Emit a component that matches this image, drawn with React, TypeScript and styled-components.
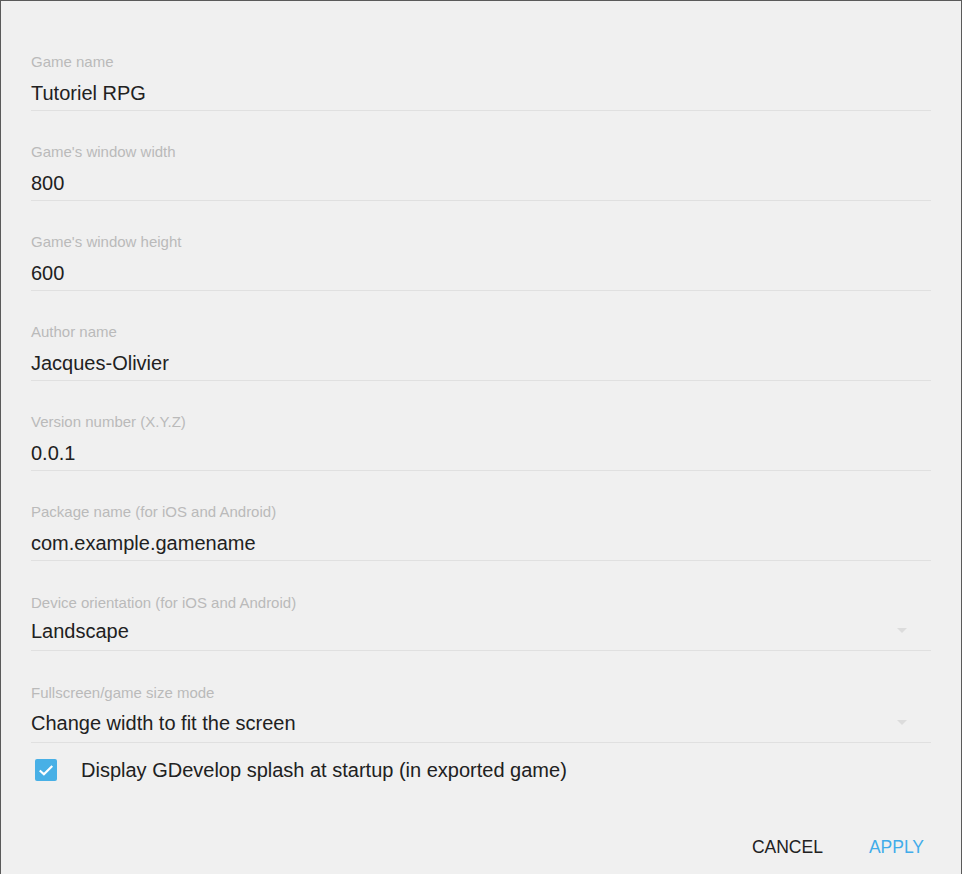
import React from "react";
import styled, { createGlobalStyle } from "styled-components";

const GlobalStyle = createGlobalStyle`
  html, body {
    margin: 0;
    padding: 0;
    background: #f0f0f0;
  }
  body {
    font-family: "Liberation Sans", Arial, sans-serif;
  }
`;

interface IField {
  label: string;
  value: string;
  select?: boolean;
  gap?: number;
}

const fields: IField[] = [
  { label: "Game name", value: "Tutoriel RPG" },
  { label: "Game's window width", value: "800" },
  { label: "Game's window height", value: "600" },
  { label: "Author name", value: "Jacques-Olivier" },
  { label: "Version number (X.Y.Z)", value: "0.0.1" },
  { label: "Package name (for iOS and Android)", value: "com.example.gamename" },
  { label: "Device orientation (for iOS and Android)", value: "Landscape", select: true, gap: 8 },
  { label: "Fullscreen/game size mode", value: "Change width to fit the screen", select: true, gap: 10 },
];

const Field: React.FC<IField> = ({ label, value, select, gap = 11 }) => {
  return (
    <FieldContainer $select={select}>
      <Label>{label}</Label>
      <Value $select={select} $gap={gap}>
        <span>{value}</span>
        {select && <Arrow />}
      </Value>
    </FieldContainer>
  );
};

export default function App() {
  return (
    <>
      <GlobalStyle />
      <Dialog>
        <Form>
          {fields.map((f) => (
            <Field key={f.label} {...f} />
          ))}
          <CheckRow>
            <CheckBox>
              <svg width="20" height="20" viewBox="0 0 24 24">
                <path d="M4.5 12.5 L9.5 17.2 L19.5 7.2" fill="none" stroke="#fff" strokeWidth="2.6" />
              </svg>
            </CheckBox>
            <CheckLabel>Display GDevelop splash at startup (in exported game)</CheckLabel>
          </CheckRow>
        </Form>
        <Actions>
          <Button>Cancel</Button>
          <Button $primary>Apply</Button>
        </Actions>
      </Dialog>
    </>
  );
}

const Dialog = styled.div`
  box-sizing: border-box;
  width: 962px;
  height: 874px;
  background: #f0f0f0;
  border-top: 1px solid #5a5a5a;
  border-left: 1px solid #5a5a5a;
  border-right: 1px solid #5a5a5a;
  display: flex;
  flex-direction: column;
  overflow: hidden;
`;

const Form = styled.div`
  padding: 20px 30px 0 30px;
  display: flex;
  flex-direction: column;
`;

const FieldContainer = styled.div<{ $select?: boolean }>`
  margin-top: ${(p) => (p.$select ? "34px" : "33px")};
  display: flex;
  flex-direction: column;
  border-bottom: 1px solid #e0e0e0;

  &:first-child {
    margin-top: 33px;
  }
`;

const Label = styled.div`
  font-size: 15px;
  line-height: 16px;
  color: #bababa;
`;

const Value = styled.div<{ $select?: boolean; $gap: number }>`
  position: relative;
  margin-top: ${(p) => p.$gap}px;
  padding-bottom: ${(p) => (p.$select ? "7px" : "5px")};
  font-size: 20px;
  line-height: 24px;
  color: #212121;
`;

const Arrow = styled.div`
  position: absolute;
  right: 24px;
  top: 9px;
  width: 0;
  height: 0;
  border-left: 5.5px solid transparent;
  border-right: 5.5px solid transparent;
  border-top: 5.5px solid #dcdcdc;
`;

const CheckRow = styled.div`
  display: flex;
  align-items: center;
  margin-top: 16px;
  padding-left: 4px;
  height: 22px;
`;

const CheckBox = styled.div`
  width: 22px;
  height: 22px;
  border-radius: 2px;
  background: #48b0e6;
  display: flex;
  align-items: center;
  justify-content: center;
`;

const CheckLabel = styled.div`
  margin-left: 24px;
  font-size: 20px;
  color: #212121;
`;

const Actions = styled.div`
  margin-top: auto;
  margin-bottom: 8px;
  display: flex;
  justify-content: flex-end;
  gap: 26px;
  padding-right: 27px;
`;

const Button = styled.button<{ $primary?: boolean }>`
  background: none;
  border: none;
  padding: 8px 10px;
  font-family: "Liberation Sans", Arial, sans-serif;
  font-size: 17.5px;
  text-transform: uppercase;
  color: ${(p) => (p.$primary ? "#41acea" : "#212121")};
  cursor: pointer;
`;
